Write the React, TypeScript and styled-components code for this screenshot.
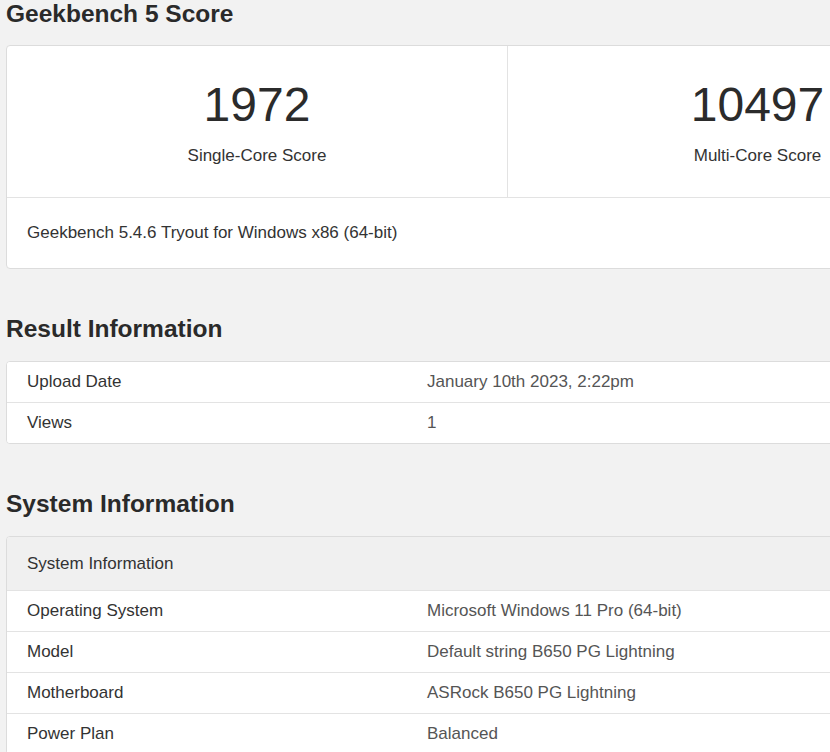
import React from "react";
import styled, { createGlobalStyle } from "styled-components";

const Global = createGlobalStyle`
  html, body { margin: 0; padding: 0; background: #f2f2f2; overflow: hidden; }
  body { font-family: "Liberation Sans", Arial, sans-serif; color: #333; }
`;

const Viewport = styled.div`
  width: 830px;
  overflow: hidden;
`;

const Page = styled.div`
  width: 1002px;
  padding: 0 0 0 6px;
`;

const Heading = styled.h2<{ $top: number }>`
  margin: ${(p) => p.$top}px 0 0 0;
  font-size: 24.5px;
  font-weight: bold;
  color: #2a2a2a;
  line-height: 28px;
  height: 28px;
`;

const Card = styled.div<{ $top: number }>`
  margin-top: ${(p) => p.$top}px;
  background: #fff;
  border: 1px solid #dcdcdc;
  border-radius: 4px;
  overflow: hidden;
`;

const ScoreRow = styled.div`
  display: grid;
  grid-template-columns: 1fr 1fr;
  height: 151px;
  border-bottom: 1px solid #e3e3e3;
`;

const ScoreCell = styled.div<{ $divider?: boolean }>`
  display: flex;
  flex-direction: column;
  align-items: center;
  padding-top: 32px;
  border-left: ${(p) => (p.$divider ? "1px solid #e3e3e3" : "none")};
`;

const BigNum = styled.div`
  font-size: 48px;
  line-height: 54px;
  color: #2b2b2b;
`;

const ScoreLabel = styled.div`
  margin-top: 14px;
  font-size: 17px;
  color: #333;
`;

const Footer = styled.div`
  height: 70px;
  display: flex;
  align-items: center;
  padding-left: 20px;
  font-size: 17px;
`;

const Row = styled.div<{ $head?: boolean }>`
  display: grid;
  grid-template-columns: 400px 1fr;
  align-items: center;
  height: ${(p) => (p.$head ? 53 : 40)}px;
  padding-left: 20px;
  font-size: 17px;
  background: ${(p) => (p.$head ? "#f0f0f0" : "#fff")};
  & + & { border-top: 1px solid #e3e3e3; }
`;

const Value = styled.span`
  color: #555;
`;

const App = () => (
  <Viewport>
    <Global />
    <Page>
      <Heading $top={0}>Geekbench 5 Score</Heading>
      <Card $top={17}>
        <ScoreRow>
          <ScoreCell>
            <BigNum>1972</BigNum>
            <ScoreLabel>Single-Core Score</ScoreLabel>
          </ScoreCell>
          <ScoreCell $divider>
            <BigNum>10497</BigNum>
            <ScoreLabel>Multi-Core Score</ScoreLabel>
          </ScoreCell>
        </ScoreRow>
        <Footer>Geekbench 5.4.6 Tryout for Windows x86 (64-bit)</Footer>
      </Card>
      <Heading $top={46}>Result Information</Heading>
      <Card $top={18}>
        <Row>
          <span>Upload Date</span>
          <Value>January 10th 2023, 2:22pm</Value>
        </Row>
        <Row>
          <span>Views</span>
          <Value>1</Value>
        </Row>
      </Card>
      <Heading $top={46}>System Information</Heading>
      <Card $top={18}>
        <Row $head>
          <span>System Information</span>
        </Row>
        {[
          ["Operating System", "Microsoft Windows 11 Pro (64-bit)"],
          ["Model", "Default string B650 PG Lightning"],
          ["Motherboard", "ASRock B650 PG Lightning"],
          ["Power Plan", "Balanced"],
        ].map(([k, v]) => (
          <Row key={k}>
            <span>{k}</span>
            <Value>{v}</Value>
          </Row>
        ))}
      </Card>
    </Page>
  </Viewport>
);

export default App;
